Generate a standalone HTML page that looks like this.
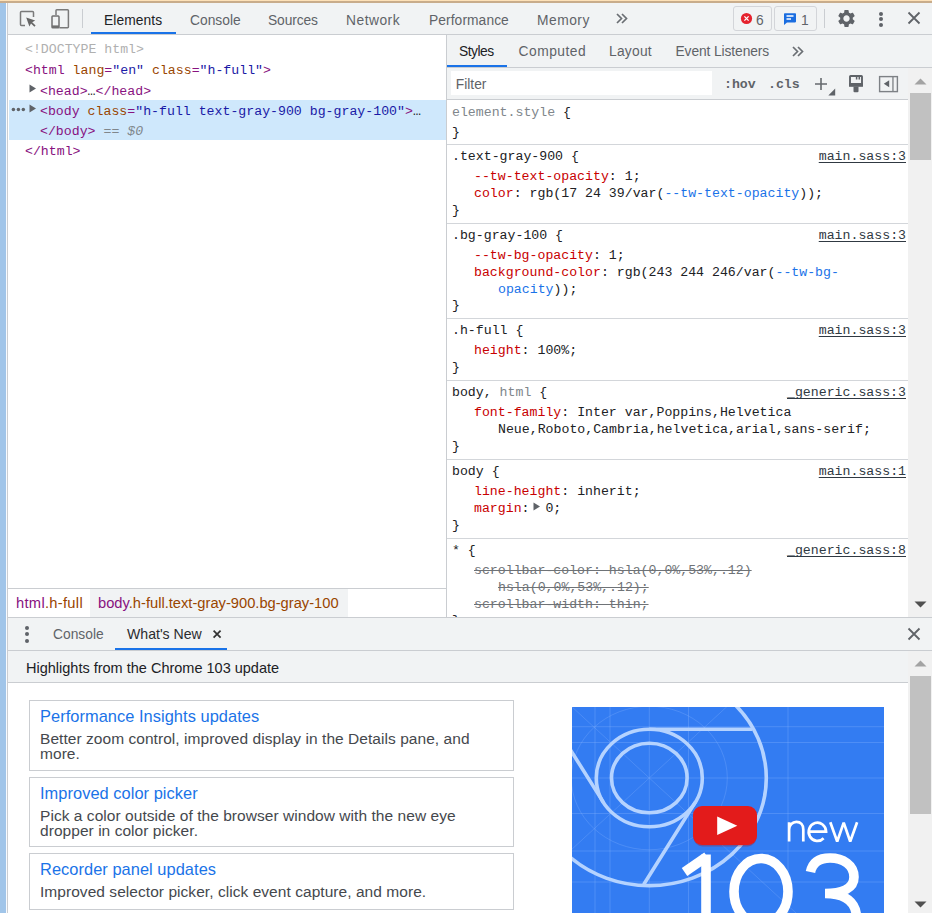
<!DOCTYPE html>
<html><head><meta charset="utf-8"><style>
html,body{margin:0;padding:0;width:932px;height:913px;overflow:hidden;background:#fff;}
body{position:relative;}
</style></head><body>
<div style="position:absolute;left:0px;top:0px;width:932px;height:1px;background:#fde1b8"></div>
<div style="position:absolute;left:0px;top:1px;width:932px;height:2px;background:#c8ac8b"></div>
<div style="position:absolute;left:0px;top:3px;width:6px;height:910px;background:#a1c5e9"></div>
<div style="position:absolute;left:6px;top:3px;width:1px;height:910px;background:#f8fbff"></div>
<div style="position:absolute;left:7px;top:3px;width:1px;height:910px;background:#cbcdd1"></div>
<div style="position:absolute;left:8px;top:3px;width:924px;height:31px;background:#f1f3f4"></div>
<div style="position:absolute;left:8px;top:34px;width:924px;height:1px;background:#cacdd1"></div>
<svg style="position:absolute;left:18px;top:9px" width="20" height="20" viewBox="0 0 20 20">
<path d="M7 16.5H3.5Q2.5 16.5 2.5 15.5V3.5Q2.5 2.5 3.5 2.5H14.5Q15.5 2.5 15.5 3.5V8" fill="none" stroke="#7a7a7a" stroke-width="1.5"/>
<path d="M8.2 8.4L17.2 11.6L14.2 13.2L17.6 16.6L16.4 17.8L13 14.4L11.4 17.4Z" fill="#666"/>
</svg>
<svg style="position:absolute;left:50px;top:8px" width="21" height="21" viewBox="0 0 21 21">
<path d="M6 7V2.5Q6 1.7 6.8 1.7H17.6Q18.4 1.7 18.4 2.5V19Q18.4 19.7 17.6 19.7H9.5" fill="none" stroke="#7a7a7a" stroke-width="1.5"/>
<rect x="2" y="8" width="7" height="11.8" rx="0.8" fill="none" stroke="#707070" stroke-width="1.5"/>
<rect x="2" y="17.4" width="7" height="2.4" fill="#707070"/>
</svg>
<div style="position:absolute;left:82px;top:9px;width:1px;height:19px;background:#cacdd1"></div>
<div style="position:absolute;left:104px;top:10.72px;height:20px;line-height:20px;font-family:'Liberation Sans', sans-serif;font-size:13.8px;color:#202124;white-space:pre;letter-spacing:0.08px;">Elements</div>
<div style="position:absolute;left:190px;top:10.72px;height:20px;line-height:20px;font-family:'Liberation Sans', sans-serif;font-size:13.8px;color:#5f6368;white-space:pre;letter-spacing:0px;">Console</div>
<div style="position:absolute;left:268px;top:10.72px;height:20px;line-height:20px;font-family:'Liberation Sans', sans-serif;font-size:13.8px;color:#5f6368;white-space:pre;letter-spacing:-0.1px;">Sources</div>
<div style="position:absolute;left:346px;top:10.72px;height:20px;line-height:20px;font-family:'Liberation Sans', sans-serif;font-size:13.8px;color:#5f6368;white-space:pre;letter-spacing:0.5px;">Network</div>
<div style="position:absolute;left:429px;top:10.72px;height:20px;line-height:20px;font-family:'Liberation Sans', sans-serif;font-size:13.8px;color:#5f6368;white-space:pre;letter-spacing:0.08px;">Performance</div>
<div style="position:absolute;left:537px;top:10.72px;height:20px;line-height:20px;font-family:'Liberation Sans', sans-serif;font-size:13.8px;color:#5f6368;white-space:pre;letter-spacing:0.5px;">Memory</div>
<div style="position:absolute;left:91px;top:32px;width:85px;height:2px;background:#1a73e8"></div>
<svg style="position:absolute;left:614.5px;top:12px" width="14" height="13" viewBox="0 0 14 13"><path d="M2 2L6.5 6.5L2 11M7 2L11.5 6.5L7 11" fill="none" stroke="#6a6e73" stroke-width="1.7"/></svg>
<div style="position:absolute;left:733px;top:6px;width:37px;height:23px;border:1px solid #d3d5d9;border-radius:3px;box-sizing:content-box"></div>
<svg style="position:absolute;left:740px;top:12px" width="13" height="13" viewBox="0 0 13 13"><circle cx="6.5" cy="6.5" r="5.6" fill="#e5222e"/><path d="M4.4 4.4L8.6 8.6M8.6 4.4L4.4 8.6" stroke="#fff" stroke-width="1.3"/></svg>
<div style="position:absolute;left:756px;top:10.72px;height:20px;line-height:20px;font-family:'Liberation Sans', sans-serif;font-size:13.8px;color:#5f6368;white-space:pre;letter-spacing:0px;">6</div>
<div style="position:absolute;left:774px;top:6px;width:41px;height:23px;border:1px solid #d3d5d9;border-radius:3px;box-sizing:content-box"></div>
<svg style="position:absolute;left:783px;top:12px" width="14" height="14" viewBox="0 0 14 14"><path d="M1.8 1.2H12.2Q13 1.2 13 2V9.6Q13 10.4 12.2 10.4H4L1 13V2Q1 1.2 1.8 1.2Z" fill="#1a6de0"/><path d="M3.5 4H10.5M3.5 7H8" stroke="#fff" stroke-width="1.3"/></svg>
<div style="position:absolute;left:801px;top:10.72px;height:20px;line-height:20px;font-family:'Liberation Sans', sans-serif;font-size:13.8px;color:#5f6368;white-space:pre;letter-spacing:0px;">1</div>
<div style="position:absolute;left:824px;top:9px;width:1px;height:19px;background:#cacdd1"></div>
<svg style="position:absolute;left:836px;top:7.6px" width="21" height="21" viewBox="0 0 24 24"><path fill="#5f6368" d="M19.14 12.94c.04-.3.06-.61.06-.94 0-.32-.02-.64-.07-.94l2.03-1.58a.49.49 0 0 0 .12-.61l-1.92-3.32a.488.488 0 0 0-.59-.22l-2.39.96c-.5-.38-1.03-.7-1.62-.94l-.36-2.54a.484.484 0 0 0-.48-.41h-3.84c-.24 0-.43.17-.47.41l-.36 2.54c-.59.24-1.13.57-1.62.94l-2.39-.96c-.22-.08-.47 0-.59.22L2.74 8.87c-.12.21-.08.47.12.61l2.03 1.58c-.05.3-.09.63-.09.94s.02.64.07.94l-2.03 1.58a.49.49 0 0 0-.12.61l1.92 3.32c.12.22.37.29.59.22l2.39-.96c.5.38 1.03.7 1.62.94l.36 2.54c.05.24.24.41.48.41h3.84c.24 0 .44-.17.47-.41l.36-2.54c.59-.24 1.13-.56 1.62-.94l2.39.96c.22.08.47 0 .59-.22l1.92-3.32c.12-.22.07-.47-.12-.61l-2.01-1.58zM12 15.6c-1.98 0-3.6-1.62-3.6-3.6s1.62-3.6 3.6-3.6 3.6 1.62 3.6 3.6-1.62 3.6-3.6 3.6z"/></svg>
<div style="position:absolute;left:878.8px;top:11.5px;width:4px;height:4px;background:#5f6368;border-radius:50%"></div>
<div style="position:absolute;left:878.8px;top:17px;width:4px;height:4px;background:#5f6368;border-radius:50%"></div>
<div style="position:absolute;left:878.8px;top:22.5px;width:4px;height:4px;background:#5f6368;border-radius:50%"></div>
<svg style="position:absolute;left:906px;top:10.2px" width="16" height="16" viewBox="0 0 16 16"><path d="M2.5 2.5L13.5 13.5M13.5 2.5L2.5 13.5" stroke="#5f6368" stroke-width="1.8"/></svg>
<div style="position:absolute;left:8px;top:35px;width:438px;height:553px;background:#fff"></div>
<div style="position:absolute;left:9px;top:100px;width:437px;height:40px;background:#cfe8fc"></div>
<div style="position:absolute;left:25px;top:40.08px;height:20px;line-height:20px;font-family:'Liberation Mono', monospace;font-size:13.23px;color:#b0b0b0;white-space:pre;letter-spacing:0px;">&lt;!DOCTYPE html&gt;</div>
<div style="position:absolute;left:25px;top:61.48px;height:20px;line-height:20px;font-family:'Liberation Mono', monospace;font-size:13.23px;color:#202124;white-space:pre;letter-spacing:0px;"><span style="color:#881280">&lt;html</span> <span style="color:#994500">lang</span><span style="color:#881280">=</span><span style="color:#1a1aa6">"en"</span> <span style="color:#994500">class</span><span style="color:#881280">=</span><span style="color:#1a1aa6">"h-full"</span><span style="color:#881280">&gt;</span></div>
<svg style="position:absolute;left:29px;top:84px" width="8" height="9" viewBox="0 0 8 9"><path d="M0.5 0.5L7 4.5L0.5 8.5Z" fill="#5f6368"/></svg>
<div style="position:absolute;left:40px;top:81.78px;height:20px;line-height:20px;font-family:'Liberation Mono', monospace;font-size:13.23px;color:#202124;white-space:pre;letter-spacing:0px;"><span style="color:#881280">&lt;head&gt;</span><span style="color:#202124">…</span><span style="color:#881280">&lt;/head&gt;</span></div>
<svg style="position:absolute;left:29px;top:104px" width="8" height="9" viewBox="0 0 8 9"><path d="M0.5 0.5L7 4.5L0.5 8.5Z" fill="#5f6368"/></svg>
<svg style="position:absolute;left:10px;top:106px" width="17" height="7" viewBox="0 0 17 7"><circle cx="3.4" cy="3.5" r="1.75" fill="#5f6368"/><circle cx="8.4" cy="3.5" r="1.75" fill="#5f6368"/><circle cx="13.3" cy="3.5" r="1.75" fill="#5f6368"/></svg>
<div style="position:absolute;left:40px;top:101.98px;height:20px;line-height:20px;font-family:'Liberation Mono', monospace;font-size:13.23px;color:#202124;white-space:pre;letter-spacing:0px;"><span style="color:#881280">&lt;body</span> <span style="color:#994500">class</span><span style="color:#881280">=</span><span style="color:#1a1aa6">"h-full text-gray-900 bg-gray-100"</span><span style="color:#881280">&gt;</span><span style="color:#202124">…</span></div>
<div style="position:absolute;left:40px;top:121.98px;height:20px;line-height:20px;font-family:'Liberation Mono', monospace;font-size:13.23px;color:#202124;white-space:pre;letter-spacing:0px;"><span style="color:#881280">&lt;/body&gt;</span> <span style="color:#80868b"><i>== $0</i></span></div>
<div style="position:absolute;left:25px;top:142.48px;height:20px;line-height:20px;font-family:'Liberation Mono', monospace;font-size:13.23px;color:#202124;white-space:pre;letter-spacing:0px;"><span style="color:#881280">&lt;/html&gt;</span></div>
<div style="position:absolute;left:8px;top:588px;width:438px;height:1px;background:#cacdd1"></div>
<div style="position:absolute;left:8px;top:589px;width:438px;height:28px;background:#fff"></div>
<div style="position:absolute;left:90px;top:589px;width:258px;height:28px;background:#f1f3f4"></div>
<div style="position:absolute;left:16px;top:593.40px;height:20px;line-height:20px;font-family:'Liberation Sans', sans-serif;font-size:14.7px;color:#202124;white-space:pre;letter-spacing:0.3px;"><span style="color:#881280">html</span><span style="color:#994500">.h-full</span></div>
<div style="position:absolute;left:98px;top:593.40px;height:20px;line-height:20px;font-family:'Liberation Sans', sans-serif;font-size:14.7px;color:#202124;white-space:pre;letter-spacing:0px;"><span style="color:#881280">body</span><span style="color:#994500">.h-full.text-gray-900.bg-gray-100</span></div>
<div style="position:absolute;left:446px;top:35px;width:1px;height:582px;background:#cacdd1"></div>
<div style="position:absolute;left:447px;top:35px;width:485px;height:32px;background:#f1f3f4"></div>
<div style="position:absolute;left:447px;top:67px;width:485px;height:1px;background:#cacdd1"></div>
<div style="position:absolute;left:447px;top:65px;width:60px;height:2px;background:#1a73e8"></div>
<div style="position:absolute;left:459px;top:42.22px;height:20px;line-height:20px;font-family:'Liberation Sans', sans-serif;font-size:13.8px;color:#202124;white-space:pre;letter-spacing:-0.5px;">Styles</div>
<div style="position:absolute;left:518.5px;top:42.22px;height:20px;line-height:20px;font-family:'Liberation Sans', sans-serif;font-size:13.8px;color:#5f6368;white-space:pre;letter-spacing:0.5px;">Computed</div>
<div style="position:absolute;left:609px;top:42.22px;height:20px;line-height:20px;font-family:'Liberation Sans', sans-serif;font-size:13.8px;color:#5f6368;white-space:pre;letter-spacing:0.24px;">Layout</div>
<div style="position:absolute;left:675.5px;top:42.22px;height:20px;line-height:20px;font-family:'Liberation Sans', sans-serif;font-size:13.8px;color:#5f6368;white-space:pre;letter-spacing:-0.1px;">Event Listeners</div>
<svg style="position:absolute;left:790.5px;top:44.6px" width="14" height="13" viewBox="0 0 14 13"><path d="M2 2L6.5 6.5L2 11M7 2L11.5 6.5L7 11" fill="none" stroke="#6a6e73" stroke-width="1.7"/></svg>
<div style="position:absolute;left:447px;top:68px;width:461px;height:31px;background:#f1f3f4"></div>
<div style="position:absolute;left:447px;top:99px;width:461px;height:1px;background:#cacdd1"></div>
<div style="position:absolute;left:451px;top:71px;width:261px;height:24px;background:#fff"></div>
<div style="position:absolute;left:455.8px;top:75.42px;height:20px;line-height:20px;font-family:'Liberation Sans', sans-serif;font-size:13.8px;color:#5f6368;white-space:pre;letter-spacing:0px;">Filter</div>
<div style="position:absolute;left:724px;top:75.28px;height:20px;line-height:20px;font-family:'Liberation Mono', monospace;font-size:13.23px;color:#5f6368;white-space:pre;letter-spacing:0px;font-weight:bold;">:hov</div>
<div style="position:absolute;left:768px;top:75.28px;height:20px;line-height:20px;font-family:'Liberation Mono', monospace;font-size:13.23px;color:#5f6368;white-space:pre;letter-spacing:0px;font-weight:bold;">.cls</div>
<svg style="position:absolute;left:813px;top:75.6px" width="24" height="20" viewBox="0 0 24 20"><path d="M8 2V14M2 8H14" stroke="#666a6e" stroke-width="1.6"/><path d="M22.2 12.6V19.5H15.3Z" fill="#5f6368"/></svg>
<svg style="position:absolute;left:847px;top:74px" width="18" height="20" viewBox="0 0 18 20"><path d="M3 2.6Q3 2 3.6 2H14.4Q15 2 15 2.6V11.5H3Z" fill="none" stroke="#5f6368" stroke-width="1.9"/><rect x="2.05" y="9" width="13.9" height="3.6" fill="#5f6368"/><path d="M6.5 12.5H11.5V17.2Q11.5 18.3 10.4 18.3H7.6Q6.5 18.3 6.5 17.2Z" fill="#5f6368"/><path d="M9.6 2V5.6M12.3 2V5.6" stroke="#5f6368" stroke-width="1.5"/></svg>
<svg style="position:absolute;left:878px;top:75px" width="21" height="18" viewBox="0 0 21 18"><rect x="1.6" y="1.6" width="17.8" height="15" fill="none" stroke="#7d8185" stroke-width="1.4"/><rect x="14.3" y="1.6" width="1.3" height="15" fill="#7d8185"/><path d="M11.2 5.2V12.2L5.8 8.7Z" fill="#5f6368"/></svg>
<div style="position:absolute;left:908px;top:68px;width:24px;height:549px;background:#f1f1f1"></div>
<div style="position:absolute;left:910px;top:93px;width:21px;height:67px;background:#c1c1c1"></div>
<svg style="position:absolute;left:914px;top:78px" width="13" height="7" viewBox="0 0 13 7"><path d="M0.5 6.5L6.5 0.5L12.5 6.5Z" fill="#a3a3a3"/></svg>
<svg style="position:absolute;left:914px;top:601px" width="13" height="7" viewBox="0 0 13 7"><path d="M0.5 0.5L6.5 6.5L12.5 0.5Z" fill="#505050"/></svg>
<div style="position:absolute;left:447px;top:100px;width:461px;height:517px;background:#fff"></div>
<div style="position:absolute;left:447px;top:144px;width:461px;height:1px;background:#d3d6da"></div>
<div style="position:absolute;left:447px;top:223px;width:461px;height:1px;background:#d3d6da"></div>
<div style="position:absolute;left:447px;top:318px;width:461px;height:1px;background:#d3d6da"></div>
<div style="position:absolute;left:447px;top:380px;width:461px;height:1px;background:#d3d6da"></div>
<div style="position:absolute;left:447px;top:459px;width:461px;height:1px;background:#d3d6da"></div>
<div style="position:absolute;left:447px;top:538px;width:461px;height:1px;background:#d3d6da"></div>
<div style="position:absolute;left:452px;top:103.48px;height:20px;line-height:20px;font-family:'Liberation Mono', monospace;font-size:13.23px;color:#202124;white-space:pre;letter-spacing:0px;"><span style="color:#80868b">element.style</span> <span style="color:#202124">{</span></div>
<div style="position:absolute;left:452px;top:122.68px;height:20px;line-height:20px;font-family:'Liberation Mono', monospace;font-size:13.23px;color:#202124;white-space:pre;letter-spacing:0px;">}</div>
<div style="position:absolute;left:452px;top:147.48px;height:20px;line-height:20px;font-family:'Liberation Mono', monospace;font-size:13.23px;color:#202124;white-space:pre;letter-spacing:0px;">.text-gray-900 {</div>
<div style="position:absolute;right:26px;top:147.48px;height:20px;line-height:20px;font-family:'Liberation Mono', monospace;font-size:13.23px;color:#303942;white-space:pre;letter-spacing:0px;"><span style="text-decoration:underline;text-underline-offset:2px">main.sass:3</span></div>
<div style="position:absolute;left:474px;top:167.08px;height:20px;line-height:20px;font-family:'Liberation Mono', monospace;font-size:13.23px;color:#202124;white-space:pre;letter-spacing:0px;"><span style="color:#c80000">--tw-text-opacity</span>: 1;</div>
<div style="position:absolute;left:474px;top:183.88px;height:20px;line-height:20px;font-family:'Liberation Mono', monospace;font-size:13.23px;color:#202124;white-space:pre;letter-spacing:0px;"><span style="color:#c80000">color</span>: rgb(17 24 39/var(<span style="color:#1a73e8">--tw-text-opacity</span>));</div>
<div style="position:absolute;left:452px;top:200.68px;height:20px;line-height:20px;font-family:'Liberation Mono', monospace;font-size:13.23px;color:#202124;white-space:pre;letter-spacing:0px;">}</div>
<div style="position:absolute;left:452px;top:226.48px;height:20px;line-height:20px;font-family:'Liberation Mono', monospace;font-size:13.23px;color:#202124;white-space:pre;letter-spacing:0px;">.bg-gray-100 {</div>
<div style="position:absolute;right:26px;top:226.48px;height:20px;line-height:20px;font-family:'Liberation Mono', monospace;font-size:13.23px;color:#303942;white-space:pre;letter-spacing:0px;"><span style="text-decoration:underline;text-underline-offset:2px">main.sass:3</span></div>
<div style="position:absolute;left:474px;top:246.08px;height:20px;line-height:20px;font-family:'Liberation Mono', monospace;font-size:13.23px;color:#202124;white-space:pre;letter-spacing:0px;"><span style="color:#c80000">--tw-bg-opacity</span>: 1;</div>
<div style="position:absolute;left:474px;top:262.88px;height:20px;line-height:20px;font-family:'Liberation Mono', monospace;font-size:13.23px;color:#202124;white-space:pre;letter-spacing:0px;"><span style="color:#c80000">background-color</span>: rgb(243 244 246/var(<span style="color:#1a73e8">--tw-bg-</span></div>
<div style="position:absolute;left:498px;top:279.68px;height:20px;line-height:20px;font-family:'Liberation Mono', monospace;font-size:13.23px;color:#202124;white-space:pre;letter-spacing:0px;"><span style="color:#1a73e8">opacity</span>));</div>
<div style="position:absolute;left:452px;top:296.48px;height:20px;line-height:20px;font-family:'Liberation Mono', monospace;font-size:13.23px;color:#202124;white-space:pre;letter-spacing:0px;">}</div>
<div style="position:absolute;left:452px;top:321.48px;height:20px;line-height:20px;font-family:'Liberation Mono', monospace;font-size:13.23px;color:#202124;white-space:pre;letter-spacing:0px;">.h-full {</div>
<div style="position:absolute;right:26px;top:321.48px;height:20px;line-height:20px;font-family:'Liberation Mono', monospace;font-size:13.23px;color:#303942;white-space:pre;letter-spacing:0px;"><span style="text-decoration:underline;text-underline-offset:2px">main.sass:3</span></div>
<div style="position:absolute;left:474px;top:341.08px;height:20px;line-height:20px;font-family:'Liberation Mono', monospace;font-size:13.23px;color:#202124;white-space:pre;letter-spacing:0px;"><span style="color:#c80000">height</span>: 100%;</div>
<div style="position:absolute;left:452px;top:357.88px;height:20px;line-height:20px;font-family:'Liberation Mono', monospace;font-size:13.23px;color:#202124;white-space:pre;letter-spacing:0px;">}</div>
<div style="position:absolute;left:452px;top:383.48px;height:20px;line-height:20px;font-family:'Liberation Mono', monospace;font-size:13.23px;color:#202124;white-space:pre;letter-spacing:0px;">body, <span style="color:#80868b">html</span> {</div>
<div style="position:absolute;right:26px;top:383.48px;height:20px;line-height:20px;font-family:'Liberation Mono', monospace;font-size:13.23px;color:#303942;white-space:pre;letter-spacing:0px;"><span style="text-decoration:underline;text-underline-offset:2px">_generic.sass:3</span></div>
<div style="position:absolute;left:474px;top:403.08px;height:20px;line-height:20px;font-family:'Liberation Mono', monospace;font-size:13.23px;color:#202124;white-space:pre;letter-spacing:0px;"><span style="color:#c80000">font-family</span>: Inter var,Poppins,Helvetica</div>
<div style="position:absolute;left:498px;top:419.88px;height:20px;line-height:20px;font-family:'Liberation Mono', monospace;font-size:13.23px;color:#202124;white-space:pre;letter-spacing:0px;">Neue,Roboto,Cambria,helvetica,arial,sans-serif;</div>
<div style="position:absolute;left:452px;top:436.68px;height:20px;line-height:20px;font-family:'Liberation Mono', monospace;font-size:13.23px;color:#202124;white-space:pre;letter-spacing:0px;">}</div>
<div style="position:absolute;left:452px;top:462.48px;height:20px;line-height:20px;font-family:'Liberation Mono', monospace;font-size:13.23px;color:#202124;white-space:pre;letter-spacing:0px;">body {</div>
<div style="position:absolute;right:26px;top:462.48px;height:20px;line-height:20px;font-family:'Liberation Mono', monospace;font-size:13.23px;color:#303942;white-space:pre;letter-spacing:0px;"><span style="text-decoration:underline;text-underline-offset:2px">main.sass:1</span></div>
<div style="position:absolute;left:474px;top:482.08px;height:20px;line-height:20px;font-family:'Liberation Mono', monospace;font-size:13.23px;color:#202124;white-space:pre;letter-spacing:0px;"><span style="color:#c80000">line-height</span>: inherit;</div>
<div style="position:absolute;left:474px;top:498.88px;height:20px;line-height:20px;font-family:'Liberation Mono', monospace;font-size:13.23px;color:#202124;white-space:pre;letter-spacing:0px;"><span style="color:#c80000">margin</span>:  0;</div>
<svg style="position:absolute;left:533px;top:502px" width="8" height="9" viewBox="0 0 8 9"><path d="M0.5 0.5L7 4.5L0.5 8.5Z" fill="#5f6368"/></svg>
<div style="position:absolute;left:452px;top:515.68px;height:20px;line-height:20px;font-family:'Liberation Mono', monospace;font-size:13.23px;color:#202124;white-space:pre;letter-spacing:0px;">}</div>
<div style="position:absolute;left:452px;top:541.48px;height:20px;line-height:20px;font-family:'Liberation Mono', monospace;font-size:13.23px;color:#202124;white-space:pre;letter-spacing:0px;">* {</div>
<div style="position:absolute;right:26px;top:541.48px;height:20px;line-height:20px;font-family:'Liberation Mono', monospace;font-size:13.23px;color:#303942;white-space:pre;letter-spacing:0px;"><span style="text-decoration:underline;text-underline-offset:2px">_generic.sass:8</span></div>
<div style="position:absolute;left:474px;top:561.08px;height:20px;line-height:20px;font-family:'Liberation Mono', monospace;font-size:13.23px;color:#6f7377;white-space:pre;letter-spacing:0px;text-decoration:line-through;">scrollbar-color: hsla(0,0%,53%,.12)</div>
<div style="position:absolute;left:498px;top:577.88px;height:20px;line-height:20px;font-family:'Liberation Mono', monospace;font-size:13.23px;color:#6f7377;white-space:pre;letter-spacing:0px;text-decoration:line-through;">hsla(0,0%,53%,.12);</div>
<div style="position:absolute;left:474px;top:594.68px;height:20px;line-height:20px;font-family:'Liberation Mono', monospace;font-size:13.23px;color:#6f7377;white-space:pre;letter-spacing:0px;text-decoration:line-through;">scrollbar-width: thin;</div>
<div style="position:absolute;left:0;top:0;width:932px;height:617px;overflow:hidden">
<div style="position:absolute;left:452px;top:611.48px;height:20px;line-height:20px;font-family:'Liberation Mono', monospace;font-size:13.23px;color:#202124;white-space:pre;letter-spacing:0px;">}</div>
</div>
<div style="position:absolute;left:8px;top:617px;width:924px;height:1px;background:#cacdd1"></div>
<div style="position:absolute;left:8px;top:618px;width:924px;height:32px;background:#f1f3f4"></div>
<div style="position:absolute;left:8px;top:650px;width:924px;height:1px;background:#cacdd1"></div>
<div style="position:absolute;left:25.3px;top:625.5px;width:4px;height:4px;background:#5f6368;border-radius:50%"></div>
<div style="position:absolute;left:25.3px;top:632px;width:4px;height:4px;background:#5f6368;border-radius:50%"></div>
<div style="position:absolute;left:25.3px;top:638.5px;width:4px;height:4px;background:#5f6368;border-radius:50%"></div>
<div style="position:absolute;left:53px;top:625.22px;height:20px;line-height:20px;font-family:'Liberation Sans', sans-serif;font-size:13.8px;color:#5f6368;white-space:pre;letter-spacing:0px;">Console</div>
<div style="position:absolute;left:127px;top:624.31px;height:20px;line-height:20px;font-family:'Liberation Sans', sans-serif;font-size:14.1px;color:#2b2c2f;white-space:pre;letter-spacing:0px;">What's New</div>
<svg style="position:absolute;left:212px;top:629px" width="10" height="10" viewBox="0 0 10 10"><path d="M1.6 1.6L8.6 8.6M8.6 1.6L1.6 8.6" stroke="#333" stroke-width="1.7"/></svg>
<div style="position:absolute;left:115px;top:648px;width:112px;height:2px;background:#1a73e8"></div>
<svg style="position:absolute;left:906px;top:626px" width="16" height="16" viewBox="0 0 16 16"><path d="M2.5 2.5L13.5 13.5M13.5 2.5L2.5 13.5" stroke="#5f6368" stroke-width="1.8"/></svg>
<div style="position:absolute;left:8px;top:651px;width:900px;height:31px;background:#f1f3f4"></div>
<div style="position:absolute;left:8px;top:682px;width:900px;height:1px;background:#cacdd1"></div>
<div style="position:absolute;left:26px;top:657.97px;height:20px;line-height:20px;font-family:'Liberation Sans', sans-serif;font-size:14.5px;color:#202124;white-space:pre;letter-spacing:0px;">Highlights from the Chrome 103 update</div>
<div style="position:absolute;left:8px;top:683px;width:900px;height:230px;background:#fff"></div>
<div style="position:absolute;left:29px;top:700px;width:485px;height:71px;border:1px solid #cacdd1;box-sizing:border-box"></div>
<div style="position:absolute;left:40px;top:706.31px;height:20px;line-height:20px;font-family:'Liberation Sans', sans-serif;font-size:16.4px;color:#1a73e8;white-space:pre;letter-spacing:0.05px;">Performance Insights updates</div>
<div style="position:absolute;left:40px;top:728.93px;height:20px;line-height:20px;font-family:'Liberation Sans', sans-serif;font-size:15.5px;color:#45484d;white-space:pre;letter-spacing:0.05px;">Better zoom control, improved display in the Details pane, and</div>
<div style="position:absolute;left:40px;top:743.53px;height:20px;line-height:20px;font-family:'Liberation Sans', sans-serif;font-size:15.5px;color:#45484d;white-space:pre;letter-spacing:0.05px;">more.</div>
<div style="position:absolute;left:29px;top:777px;width:485px;height:70px;border:1px solid #cacdd1;box-sizing:border-box"></div>
<div style="position:absolute;left:40px;top:783.31px;height:20px;line-height:20px;font-family:'Liberation Sans', sans-serif;font-size:16.4px;color:#1a73e8;white-space:pre;letter-spacing:0.05px;">Improved color picker</div>
<div style="position:absolute;left:40px;top:805.93px;height:20px;line-height:20px;font-family:'Liberation Sans', sans-serif;font-size:15.5px;color:#45484d;white-space:pre;letter-spacing:0.05px;">Pick a color outside of the browser window with the new eye</div>
<div style="position:absolute;left:40px;top:820.53px;height:20px;line-height:20px;font-family:'Liberation Sans', sans-serif;font-size:15.5px;color:#45484d;white-space:pre;letter-spacing:0.05px;">dropper in color picker.</div>
<div style="position:absolute;left:29px;top:853px;width:485px;height:57px;border:1px solid #cacdd1;box-sizing:border-box"></div>
<div style="position:absolute;left:40px;top:859.31px;height:20px;line-height:20px;font-family:'Liberation Sans', sans-serif;font-size:16.4px;color:#1a73e8;white-space:pre;letter-spacing:0.05px;">Recorder panel updates</div>
<div style="position:absolute;left:40px;top:881.93px;height:20px;line-height:20px;font-family:'Liberation Sans', sans-serif;font-size:15.5px;color:#45484d;white-space:pre;letter-spacing:0.05px;">Improved selector picker, click event capture, and more.</div>
<div style="position:absolute;left:908px;top:651px;width:24px;height:262px;background:#f1f1f1"></div>
<div style="position:absolute;left:910px;top:676px;width:21px;height:138px;background:#c1c1c1"></div>
<svg style="position:absolute;left:914px;top:660px" width="13" height="7" viewBox="0 0 13 7"><path d="M0.5 6.5L6.5 0.5L12.5 6.5Z" fill="#a3a3a3"/></svg>
<svg style="position:absolute;left:914px;top:901px" width="13" height="7" viewBox="0 0 13 7"><path d="M0.5 0.5L6.5 6.5L12.5 0.5Z" fill="#505050"/></svg>
<svg style="position:absolute;left:572px;top:707px" width="312" height="206" viewBox="0 0 312 206">
<rect width="312" height="206" fill="#337cf2"/>
<g stroke="#8db8ff" stroke-opacity="0.3" stroke-width="1" fill="none">
<path d="M23 0V206M38 0V206M77.3 0V206M116.5 0V206M216 0V206"/>
<path d="M0 19.7H312M0 35.5H312M0 71H312M0 106.5H312M0 144H312M0 175H312"/>
</g>
<g stroke="#8db8ff" stroke-opacity="0.28" stroke-width="1" fill="none" transform="translate(77.3 71) scale(1 0.92)">
<path d="M-80 -80L160 160M80 -80L-120 120" vector-effect="non-scaling-stroke"/>
<circle r="78" vector-effect="non-scaling-stroke"/>
</g>
<g stroke="#b5d3ff" stroke-width="3.6" fill="none" transform="translate(77.3 71) scale(1 0.92)">
<circle r="37.8" vector-effect="non-scaling-stroke"/>
<circle r="53" vector-effect="non-scaling-stroke"/>
<circle r="117" vector-effect="non-scaling-stroke"/>
<path d="M0 -53H103M45.9 26.5L-5.6 115.7M-45.9 26.5L-97.4 -62.7" vector-effect="non-scaling-stroke"/>
</g>
<rect x="121.5" y="100" width="63" height="38" rx="9" fill="#b01010" opacity="0.35" transform="translate(0 1.5)"/>
<rect x="121" y="99" width="64" height="39" rx="9" fill="#e31b1b"/>
<path d="M145.2 109.5V128L165.3 118.8Z" fill="#fff"/>
<g fill="none" stroke="#fff" stroke-width="2.7"><path d="M217.1 134.5V115.3M217.1 122.5C217.1 118 220.5 114.9 224.4 114.9C228.6 114.9 231.3 117.8 231.3 122.5V134.5"/><path d="M236.9 124.6H254.1A8.7 9.1 0 1 0 251.6 131.2"/><path d="M258.3 115.3L265.2 134.5L271.7 115.6L278.2 134.5L285.1 115.3" stroke-linejoin="bevel"/></g>
<g fill="none" stroke="#fff" stroke-width="9.6">
<path d="M112.5 165L135 149.5"/>
<path d="M134 147.5V210"/>
<ellipse cx="189" cy="184.5" rx="27" ry="33"/>
<path d="M238.5 165C240.5 155 248 151 258 151C271 151 282 158 282 170C282 181 271 186.5 253 186.5C273 186.5 284.5 195 284.5 211"/>
</g>
</svg>
</body></html>
